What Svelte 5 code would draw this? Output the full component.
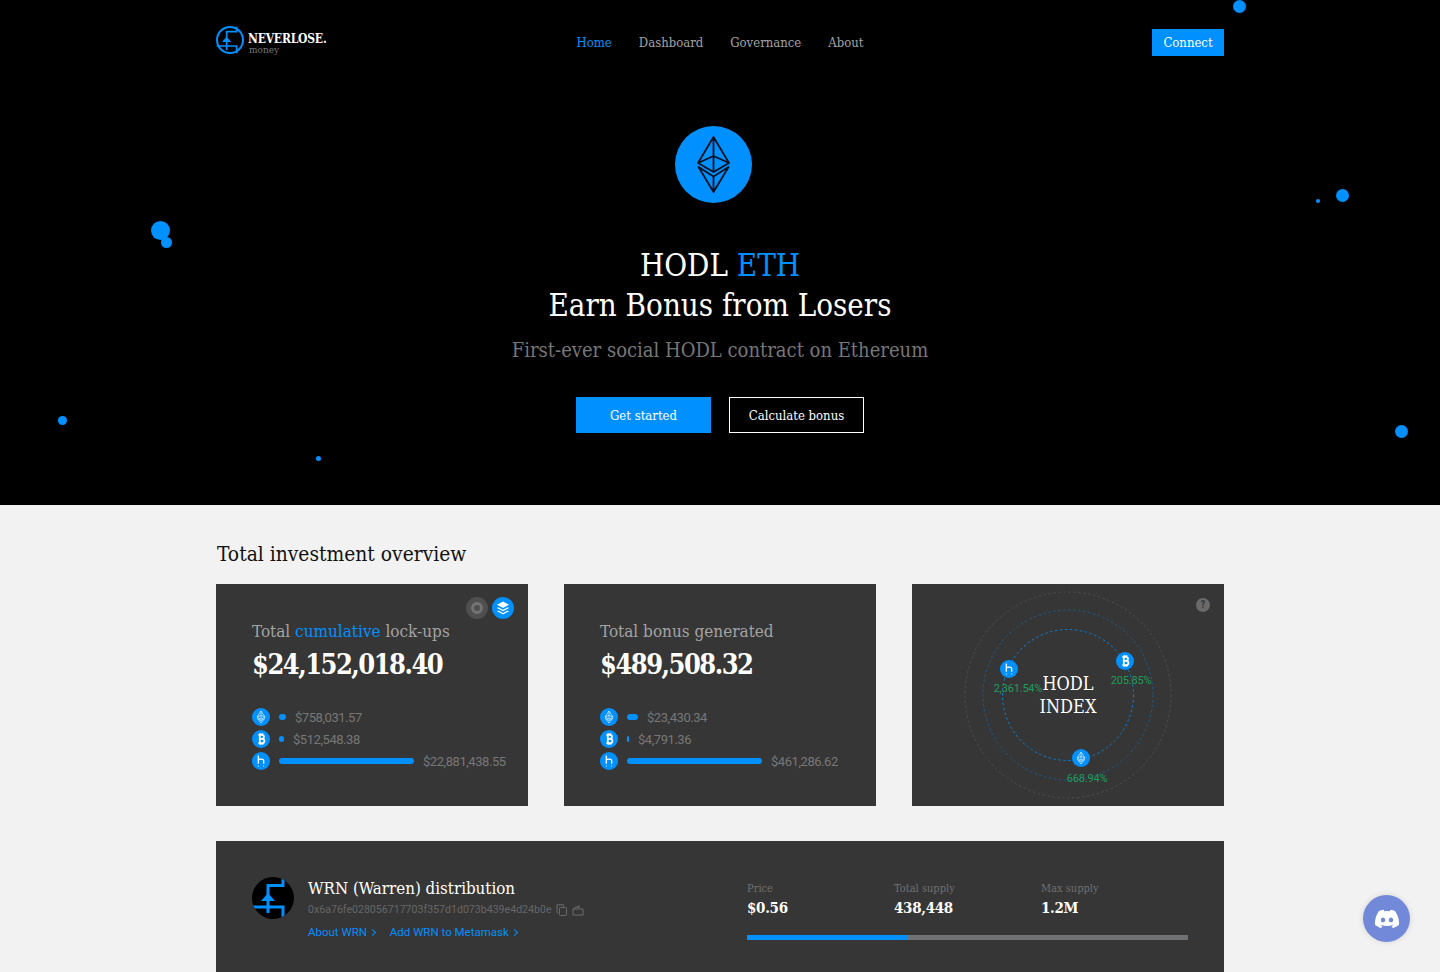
<script>
  const links = ['Home', 'Dashboard', 'Governance', 'About'];

  const dots = [
    { x: 1239.5, y: 6, r: 6.5 },
    { x: 160, y: 230.5, r: 9.5 },
    { x: 166.5, y: 242, r: 5.5 },
    { x: 1342, y: 195, r: 6.5 },
    { x: 1318, y: 201, r: 2 },
    { x: 62.5, y: 420.5, r: 4.5 },
    { x: 318, y: 458.5, r: 2.5 },
    { x: 1401.5, y: 431, r: 6.5 }
  ];

  const lockups = [
    { coin: 'eth', width: 7, value: '$758,031.57' },
    { coin: 'btc', width: 5, value: '$512,548.38' },
    { coin: 'h', width: 135, value: '$22,881,438.55' }
  ];

  const bonuses = [
    { coin: 'eth', width: 11, value: '$23,430.34' },
    { coin: 'btc', width: 2, value: '$4,791.36' },
    { coin: 'h', width: 135, value: '$461,286.62' }
  ];

  const stats = [
    { label: 'Price', value: '$0.56' },
    { label: 'Total supply', value: '438,448' },
    { label: 'Max supply', value: '1.2M' }
  ];
</script>

{#snippet coinIcon(coin)}
  <span class="coin">
    <svg viewBox="0 0 18 18" width="18" height="18" fill="none">
      {#if coin === 'eth'}
        <path d="M9 3 L13 9 L9 11.2 L5 9 Z M9 3 V11.2 M5 9 L9 7.4 L13 9 M5.3 10.4 L9 15 L12.7 10.4 L9 12.6 Z" stroke="#cfe9ff" stroke-width="0.8" stroke-linejoin="round" />
      {:else if coin === 'btc'}
        <path d="M6.4 4.800 H10 C12.600 4.800 12.600 8.800 10 8.800 H7.200 M10 8.800 C13.200 8.800 13.200 13.200 10 13.200 H6.400 M7.800 4.800 V13.200 M8.200 3.200 V4.800 M10.400 3.200 V4.800 M8.200 13.200 V14.800 M10.400 13.200 V14.800" stroke="#fff" stroke-width="1.8" />
      {:else}
        <path d="M6.300 3.600 V11.800 M6.300 8 C7 6.800 11.700 6.400 11.700 8.800 V11.800" stroke="#fff" stroke-width="1.3" />
        <path d="M6.300 13.400 V14.600 M11.700 13.400 V14.600" stroke="#cfe9ff" stroke-width="1" />
      {/if}
    </svg>
  </span>
{/snippet}

{#snippet circuit(color, width)}
  <path d="M31 1 V8.500 H16 V36 M1 30 H31 V41" fill="none" stroke={color} stroke-width={width} />
  <path d="M16 16 L23 24 H9 Z" fill={color} />
{/snippet}

<div class="page">
  {#each dots as dot}
    <span class="dot" style="left: {dot.x - dot.r}px; top: {dot.y - dot.r}px; width: {dot.r * 2}px; height: {dot.r * 2}px"></span>
  {/each}

  <section class="hero">
    <header class="nav">
      <a class="brand" href="#home">
        <svg class="brand-mark" viewBox="0 0 42 42" width="28" height="28">
          <circle cx="21" cy="21" r="19.500" fill="none" stroke="#0090ff" stroke-width="3" />
          {@render circuit('#0090ff', 2.4)}
        </svg>
        <span class="brand-text">
          <strong>NEVERLOSE.</strong>
          <small>money</small>
        </span>
      </a>
      <nav class="links">
        {#each links as link, i}
          <a href="#{link.toLowerCase()}" class:active={i === 0}>{link}</a>
        {/each}
      </nav>
      <button class="connect">Connect</button>
    </header>

    <div class="eth-badge">
      <svg viewBox="0 0 77 77" width="77" height="77" fill="none">
        <path d="M38.500 11 L54 37 L38.500 46 L23 37 Z M38.500 11 V46 M23 37 L38.500 30 L54 37 M23.500 41 L38.500 66 L53.500 41 L38.500 50.500 Z M38.500 50.500 V66" stroke="#04121f" stroke-width="1.800" stroke-linejoin="round" />
      </svg>
    </div>

    <h1>HODL <em>ETH</em><br />Earn Bonus from Losers</h1>
    <p class="lead">First-ever social HODL contract on Ethereum</p>

    <div class="actions">
      <button class="primary">Get started</button>
      <button class="outline">Calculate bonus</button>
    </div>
  </section>

  <main class="overview">
    <h2>Total investment overview</h2>

    <div class="cards">
      <article class="card">
        <div class="toggles">
          <span class="toggle off"><i></i></span>
          <span class="toggle on">
            <svg viewBox="0 0 22 22" width="22" height="22" fill="#fff">
              <path d="M11 4.500 L17 7.800 L11 11 L5 7.800 Z" />
              <path d="M6.300 10.300 L11 12.800 L15.700 10.300 L17 11 L11 14.200 L5 11 Z" />
              <path d="M6.300 13.500 L11 16 L15.700 13.500 L17 14.200 L11 17.500 L5 14.200 Z" />
            </svg>
          </span>
        </div>
        <h3>Total <em>cumulative</em> lock-ups</h3>
        <div class="amount">$24,152,018.40</div>
        <ul class="rows">
          {#each lockups as row}
            <li>
              {@render coinIcon(row.coin)}
              <span class="bar" style="width: {row.width}px"></span>
              <span class="value">{row.value}</span>
            </li>
          {/each}
        </ul>
      </article>

      <article class="card">
        <h3>Total bonus generated</h3>
        <div class="amount">$489,508.32</div>
        <ul class="rows">
          {#each bonuses as row}
            <li>
              {@render coinIcon(row.coin)}
              <span class="bar" style="width: {row.width}px"></span>
              <span class="value">{row.value}</span>
            </li>
          {/each}
        </ul>
      </article>

      <article class="card index">
        <span class="help">?</span>
        <svg class="orbits" viewBox="0 0 312 222" width="312" height="222" fill="none" stroke-dasharray="2.500 2.500">
          <circle cx="156" cy="111" r="103" stroke="#4a4d50" />
          <circle cx="156" cy="111" r="85" stroke="#1f5a8a" />
          <circle cx="156" cy="111" r="65.500" stroke="#0a7fd6" />
        </svg>
        <div class="index-title">HODL<br />INDEX</div>
        <span class="node n-h">{@render coinIcon('h')}</span>
        <span class="node n-btc">{@render coinIcon('btc')}</span>
        <span class="node n-eth">{@render coinIcon('eth')}</span>
        <span class="pct p-h">2,361.54%</span>
        <span class="pct p-btc">205.85%</span>
        <span class="pct p-eth">668.94%</span>
      </article>
    </div>

    <article class="distribution">
      <svg class="wrn-logo" viewBox="0 0 42 42" width="42" height="42">
        <circle cx="21" cy="21" r="21" fill="#000" />
        <clipPath id="wrn-clip"><circle cx="21" cy="21" r="21" /></clipPath>
        <g clip-path="url(#wrn-clip)">{@render circuit('#0090ff', 3)}</g>
      </svg>
      <div class="token">
        <h3>WRN (Warren) distribution</h3>
        <div class="address">
          0x6a76fe028056717703f357d1d073b439e4d24b0e
          <svg viewBox="0 0 12 12" width="12" height="12" fill="none" stroke="#6b6b6b">
            <rect x="3.500" y="3.500" width="7" height="8" rx="1" />
            <path d="M2 8.500 H1 V0.800 H7.500 V2.500" />
          </svg>
          <svg viewBox="0 0 12 12" width="12" height="12" fill="none" stroke="#6b6b6b">
            <path d="M1 5 H11 V11 H1 Z M1 5 L4 3 H6 M5 4 L7 1.500 V4" />
          </svg>
        </div>
        <div class="token-links">
          <a href="#about-wrn">About WRN <span class="chev"></span></a>
          <a href="#metamask">Add WRN to Metamask <span class="chev"></span></a>
        </div>
      </div>
      <div class="supply">
        <div class="stats">
          {#each stats as stat}
            <div class="stat">
              <span>{stat.label}</span>
              <strong>{stat.value}</strong>
            </div>
          {/each}
        </div>
        <div class="progress"><div class="progress-fill" style="width: 36.500%"></div></div>
      </div>
    </article>
  </main>

  <button class="discord" aria-label="Discord">
    <svg viewBox="0 0 24 24" width="24" height="24" fill="#fff">
      <path d="M20.317 4.37a19.791 19.791 0 0 0-4.885-1.515.074.074 0 0 0-.079.037c-.21.375-.444.864-.608 1.25a18.27 18.27 0 0 0-5.487 0 12.64 12.64 0 0 0-.617-1.25.077.077 0 0 0-.079-.037A19.736 19.736 0 0 0 3.677 4.37a.07.07 0 0 0-.032.027C.533 9.046-.32 13.58.099 18.057a.082.082 0 0 0 .031.057 19.9 19.9 0 0 0 5.993 3.03.078.078 0 0 0 .084-.028 14.09 14.09 0 0 0 1.226-1.994.076.076 0 0 0-.041-.106 13.107 13.107 0 0 1-1.872-.892.077.077 0 0 1-.008-.128 10.2 10.2 0 0 0 .372-.292.074.074 0 0 1 .077-.01c3.928 1.793 8.18 1.793 12.062 0a.074.074 0 0 1 .078.01c.12.098.246.198.373.292a.077.077 0 0 1-.006.127 12.299 12.299 0 0 1-1.873.892.077.077 0 0 0-.041.107c.36.698.772 1.362 1.225 1.993a.076.076 0 0 0 .084.028 19.839 19.839 0 0 0 6.002-3.03.077.077 0 0 0 .032-.054c.5-5.177-.838-9.674-3.549-13.66a.061.061 0 0 0-.031-.03zM8.02 15.33c-1.183 0-2.157-1.085-2.157-2.419 0-1.333.956-2.419 2.157-2.419 1.21 0 2.176 1.096 2.157 2.42 0 1.333-.956 2.418-2.157 2.418zm7.975 0c-1.183 0-2.157-1.085-2.157-2.419 0-1.333.955-2.419 2.157-2.419 1.21 0 2.176 1.096 2.157 2.42 0 1.333-.946 2.418-2.157 2.418z" />
    </svg>
  </button>
</div>

<style>
  :global(body) {
    margin: 0;
    background: #f2f2f2;
  }

  .page {
    --slab: "DejaVu Serif Condensed", "DejaVu Serif", "Liberation Serif", serif;
    position: relative;
    height: 972px;
    overflow: hidden;
    font-family: var(--slab);
    font-stretch: condensed;
    background: #f2f2f2;
  }

  .dot {
    position: absolute;
    border-radius: 50%;
    background: #0090ff;
  }

  .hero {
    background: #000;
    height: 505px;
    display: flex;
    flex-direction: column;
    align-items: center;
  }

  .nav {
    width: 1008px;
    height: 85px;
    display: grid;
    grid-template-columns: 1fr auto 1fr;
    align-items: center;
  }

  .brand {
    display: flex;
    align-items: center;
    gap: 4px;
    text-decoration: none;
    margin-top: -5px;
  }

  .brand-text {
    display: flex;
    flex-direction: column;
    margin-top: 8px;
  }

  .brand-text strong {
    color: #fff;
    font-size: 12px;
    line-height: 12px;
    letter-spacing: -0.2px;
  }

  .brand-text small {
    color: #777;
    font-size: 10px;
    line-height: 10px;
    padding-left: 1px;
  }

  .links {
    display: flex;
    gap: 27px;
  }

  .links a {
    color: #a3a3a3;
    font-size: 13px;
    text-decoration: none;
  }

  .links a.active {
    color: #0090ff;
  }

  button {
    font-family: var(--slab);
    font-stretch: condensed;
    border: none;
    cursor: pointer;
  }

  .connect {
    justify-self: end;
    width: 72px;
    height: 27px;
    background: #0090ff;
    color: #fff;
    font-size: 13px;
    padding: 0;
  }

  .eth-badge {
    width: 77px;
    height: 77px;
    border-radius: 50%;
    background: #0090ff;
    margin: 41px 14px 0 0;
  }

  h1 {
    margin: 42px 0 0;
    color: #fff;
    font-size: 31px;
    font-weight: 400;
    line-height: 40px;
    text-align: center;
  }

  em {
    color: #0090ff;
    font-style: normal;
  }

  .lead {
    margin: 13px 0 0;
    color: #777;
    font-size: 20px;
    line-height: 24px;
  }

  .actions {
    display: flex;
    gap: 18px;
    margin-top: 35px;
  }

  .actions button {
    width: 135px;
    height: 36px;
    font-size: 13px;
    padding: 0;
  }

  .primary {
    background: #0090ff;
    color: #fff;
  }

  .outline {
    background: #000;
    color: #fff;
    border: 1px solid #fff;
  }

  .overview {
    width: 1008px;
    margin: 0 auto;
    padding-top: 36px;
  }

  h2 {
    margin: 0 0 17px;
    padding-left: 1px;
    color: #111;
    font-size: 20.800px;
    font-weight: 400;
    line-height: 26px;
  }

  .cards {
    display: grid;
    grid-template-columns: repeat(3, 312px);
    gap: 36px;
  }

  .card {
    position: relative;
    height: 222px;
    box-sizing: border-box;
    padding: 36px 36px 0;
    background: #363636;
  }

  .card h3 {
    margin: 0;
    color: #a3a3a3;
    font-size: 17px;
    font-weight: 400;
    line-height: 22px;
  }

  .amount {
    margin-top: 5px;
    color: #fff;
    font-size: 27px;
    font-weight: 700;
    line-height: 36px;
    letter-spacing: -1.5px;
  }

  .toggles {
    position: absolute;
    top: 13px;
    right: 14px;
    display: flex;
    gap: 4px;
  }

  .toggle {
    width: 22px;
    height: 22px;
    border-radius: 50%;
    display: flex;
    align-items: center;
    justify-content: center;
  }

  .toggle.off {
    background: #4f4f4f;
  }

  .toggle.off i {
    width: 12px;
    height: 12px;
    border-radius: 50%;
    background: #4f4f4f;
    border: 3px solid #737373;
    box-sizing: border-box;
  }

  .toggle.on {
    background: #0090ff;
  }

  .rows {
    list-style: none;
    margin: 25px 0 0;
    padding: 0;
    display: flex;
    flex-direction: column;
    gap: 4px;
  }

  .rows li {
    display: flex;
    align-items: center;
    height: 18px;
  }

  .coin {
    width: 18px;
    height: 18px;
    border-radius: 50%;
    background: #0090ff;
    display: block;
    flex: none;
  }

  .coin svg {
    display: block;
  }

  .bar {
    flex: none;
    height: 6px;
    margin: 0 9px 0 9px;
    border-radius: 3px;
    background: #0090ff;
  }

  .value {
    color: #777;
    font-family: Roboto, sans-serif;
    font-stretch: normal;
    font-size: 13px;
    letter-spacing: -0.45px;
  }

  .help {
    position: absolute;
    left: 284px;
    top: 14px;
    width: 14px;
    height: 14px;
    border-radius: 50%;
    background: #6a6a6a;
    color: #363636;
    font-family: Roboto, sans-serif;
    font-size: 10px;
    font-weight: 700;
    line-height: 14px;
    text-align: center;
  }

  .orbits {
    position: absolute;
    left: 0;
    top: 0;
  }

  .index-title {
    position: absolute;
    left: 0;
    right: 0;
    top: 88px;
    color: #fff;
    font-size: 18px;
    line-height: 23px;
    text-align: center;
  }

  .node {
    position: absolute;
  }

  .n-h {
    left: 88px;
    top: 76px;
  }

  .n-btc {
    left: 204px;
    top: 68px;
  }

  .n-eth {
    left: 160px;
    top: 165px;
  }

  .pct {
    position: absolute;
    color: #1f9d5c;
    font-family: Roboto, sans-serif;
    font-stretch: normal;
    font-size: 11px;
    letter-spacing: -0.2px;
    line-height: 14px;
    transform: translateX(-50%);
  }

  .p-h {
    left: 106px;
    top: 98px;
  }

  .p-btc {
    left: 219px;
    top: 90px;
  }

  .p-eth {
    left: 175px;
    top: 188px;
  }

  .distribution {
    margin-top: 35px;
    height: 200px;
    box-sizing: border-box;
    padding: 36px;
    background: #363636;
    display: flex;
    align-items: flex-start;
  }

  .wrn-logo {
    flex: none;
    margin-right: 14px;
  }

  .token {
    width: 439px;
    flex: none;
  }

  .token h3 {
    margin: 0;
    color: #fff;
    font-size: 16.800px;
    font-weight: 400;
    line-height: 22px;
  }

  .address {
    display: flex;
    align-items: center;
    gap: 4px;
    margin-top: 3px;
    color: #666;
    font-family: Roboto, sans-serif;
    font-stretch: normal;
    font-size: 10.600px;
    line-height: 16px;
  }

  .token-links {
    display: flex;
    gap: 14px;
    margin-top: 7px;
  }

  .token-links a {
    color: #0090ff;
    font-family: Roboto, sans-serif;
    font-stretch: normal;
    font-size: 11.500px;
    line-height: 14px;
    text-decoration: none;
  }

  .chev {
    display: inline-block;
    width: 4px;
    height: 4px;
    margin: 0 1px 1px 0;
    border-top: 1.5px solid #0090ff;
    border-right: 1.5px solid #0090ff;
    transform: rotate(45deg);
  }

  .supply {
    width: 441px;
    flex: none;
    margin-top: 4px;
  }

  .stats {
    display: grid;
    grid-template-columns: repeat(3, 147px);
  }

  .stat {
    display: flex;
    flex-direction: column;
  }

  .stat span {
    color: #707070;
    font-size: 11px;
    line-height: 16px;
  }

  .stat strong {
    color: #fff;
    font-size: 15px;
    line-height: 22px;
    letter-spacing: -0.3px;
  }

  .progress {
    margin-top: 16px;
    height: 5px;
    background: #6f7275;
  }

  .progress-fill {
    height: 100%;
    background: #0090ff;
  }

  .discord {
    position: absolute;
    left: 1363px;
    top: 895px;
    width: 47px;
    height: 47px;
    padding: 0;
    border-radius: 50%;
    background: #7289da;
    box-shadow: 0 0 6px rgba(0, 0, 0, 0.12);
    display: flex;
    align-items: center;
    justify-content: center;
  }
</style>
